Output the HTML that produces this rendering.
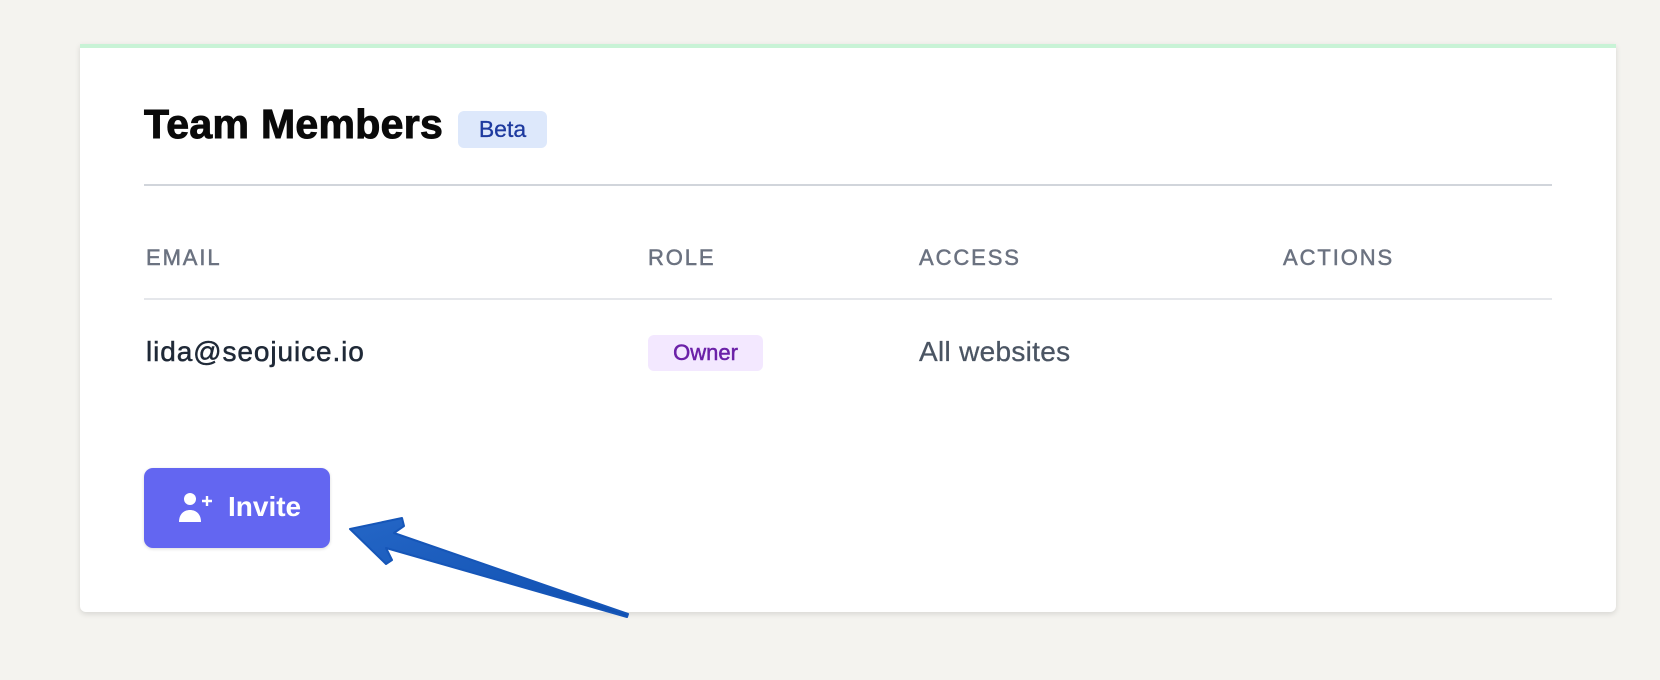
<!DOCTYPE html>
<html><head><style>
body{margin:0;width:1660px;height:680px;background:#f4f3ef;font-family:"Liberation Sans",sans-serif;position:relative;overflow:hidden}
.card{position:absolute;left:80px;top:44px;width:1536px;height:568px;background:#fff;border-top:4px solid #c8f3d6;box-sizing:border-box;border-radius:0 0 6px 6px;box-shadow:0 2px 6px rgba(0,0,0,.12)}
.abs{position:absolute}
h1{position:absolute;left:144px;top:101px;margin:0;font-size:41px;letter-spacing:0.3px;font-weight:900;color:#0a0a0a;line-height:46px;-webkit-text-stroke:1px #0a0a0a}
.beta{left:458px;top:111px;width:89px;height:37px;background:#dde8fb;color:#1e3a9f;border-radius:6px;font-size:23px;line-height:37px;text-align:center;-webkit-text-stroke:0.3px #1e3a9f}
.hr{left:144px;width:1408px}
.th{top:245px;font-size:22px;letter-spacing:1.9px;color:#6b7280;-webkit-text-stroke:0.5px #6b7280}
</style></head><body>
<div class="card"></div>
<h1>Team Members</h1>
<div class="abs beta">Beta</div>
<div class="abs hr" style="top:184px;height:2px;background:#d1d5db"></div>
<div class="abs th" style="left:146px">EMAIL</div>
<div class="abs th" style="left:648px">ROLE</div>
<div class="abs th" style="left:919px">ACCESS</div>
<div class="abs th" style="left:1283px">ACTIONS</div>
<div class="abs hr" style="top:298px;height:1.5px;background:#e5e7eb"></div>
<div class="abs" style="left:146px;top:336px;font-size:28px;letter-spacing:0.9px;color:#1f2937;-webkit-text-stroke:0.5px #1f2937">lida@seojuice.io</div>
<div class="abs" style="left:648px;top:335px;width:115px;height:36px;background:#f3e8ff;color:#6b21a8;border-radius:6px;font-size:22px;line-height:36px;text-align:center;-webkit-text-stroke:0.5px #6b21a8">Owner</div>
<div class="abs" style="left:919px;top:336px;font-size:28px;letter-spacing:0.3px;color:#4b5563;-webkit-text-stroke:0.3px #4b5563">All websites</div>
<div class="abs" style="left:144px;top:468px;width:186px;height:80px;background:#6366f1;border-radius:9px;box-shadow:0 1px 3px rgba(0,0,0,.15)">
<svg class="abs" style="left:34px;top:22px" width="36" height="36" viewBox="0 0 36 36"><circle cx="12" cy="9" r="6" fill="#fff"/><path d="M1 32c0-8 5-12 11-12s11 4 11 12z" fill="#fff"/><path d="M24 11h10M29 6v10" stroke="#fff" stroke-width="2.4"/></svg>
<div class="abs" style="left:84px;top:23px;font-size:28px;font-weight:bold;color:#fff">Invite</div>
</div>
<svg class="abs" style="left:0;top:0" width="1660" height="680"><defs><linearGradient id="g" x1="0" y1="0" x2="1" y2="1"><stop offset="0" stop-color="#2466c6"/><stop offset="1" stop-color="#0f4fb0"/></linearGradient></defs>
<polygon points="350,529 402,518 404,526 394,533 628,614 627,617 386,548 392,560 386,564" fill="url(#g)" stroke="#1656b8" stroke-width="2" stroke-linejoin="round"/></svg>
</body></html>
